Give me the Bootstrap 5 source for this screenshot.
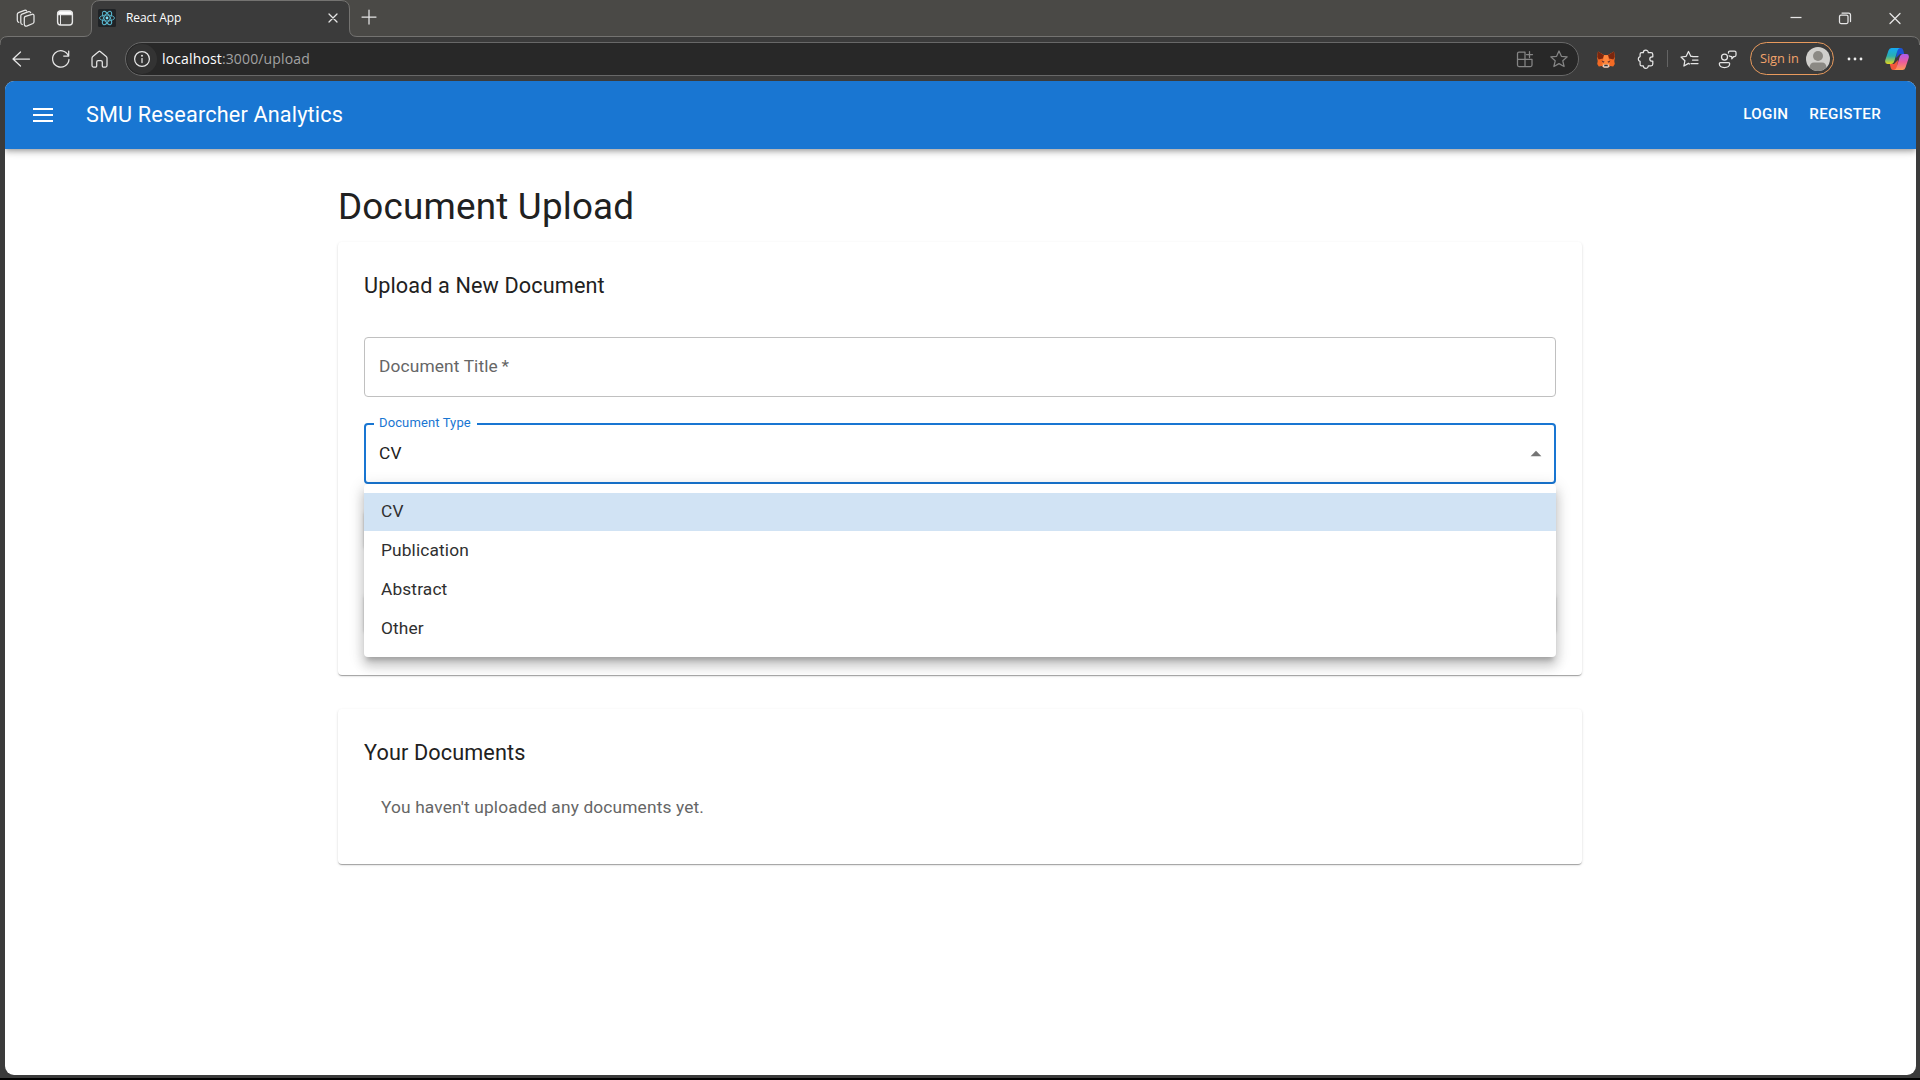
<!DOCTYPE html>
<html lang="en">
<head>
<meta charset="utf-8">
<meta name="viewport" content="width=device-width, initial-scale=1">
<title>React App</title>
<link href="https://cdn.jsdelivr.net/npm/bootstrap@5.3.0/dist/css/bootstrap.min.css" rel="stylesheet">
<style>
  body { width: 1920px; height: 1080px; overflow: hidden; background: #3b3b3b; font-family: Roboto, "Liberation Sans", sans-serif; color: #212121; border-bottom: 2px solid #000; }
  .ui-font { font-family: "Open Sans", "Noto Sans", sans-serif; }
  .ico { width: 24px; height: 24px; flex: none; display: block; fill: none; stroke: #e6e6e6; stroke-width: 1.25; stroke-linecap: round; stroke-linejoin: round; }
  .ico.dim { stroke: #858585; }
  .strip-outline { left: 0; top: 0; pointer-events: none; }
  .tab-row { height: 36px; }
  .browser-tab { width: 259px; height: 36px; margin-left: 14px; padding: 0 5px 0 7px; }
  .tab-title { font-size: 12px; letter-spacing: -.1px; color: #fff; margin-left: 10px; line-height: 16px; }
  .toolbar { height: 45px; padding: 0 11px 0 9px; }
  .address { width: 1454px; height: 34px; margin-left: 13px; background: #282828; border: 1px solid #686868; padding: 0 7px 0 1px; }
  .site-info { width: 30px; height: 30px; background: #333; }
  .url-text { font-size: 14px; margin-left: 5px; color: #a2a2a2; line-height: 20px; letter-spacing: .14px; padding-top: 1px; }
  .url-text span { color: #fff; }
  .bar-divider { width: 1px; height: 17px; margin-left: 9px; background: #646464; }
  .sign-in { width: 84px; height: 33px; margin-left: 10px; border: 1px solid #e89a5d; color: #f2a36b; font-size: 12.8px; padding: 0 3px 0 9px; letter-spacing: -.1px; }
  .viewport { margin: 0 4.5px 0 5px; height: 994px; border-radius: 9px; background: #fff; }
  .app-bar { height: 68px; background: #1976d2; color: #fff; padding: 0 34.5px 0 28px; box-shadow: 0 2px 4px -1px rgba(0,0,0,.2), 0 4px 5px rgba(0,0,0,.14), 0 1px 11px rgba(0,0,0,.12); z-index: 1; }
  .app-title { font-size: 21.67px; letter-spacing: .16px; font-weight: 400; margin-left: 33px; line-height: 34px; }
  .nav-action { font-size: 15.17px; font-weight: 500; letter-spacing: .3px; line-height: 26px; text-transform: uppercase; color: #fff; padding-bottom: 2px; }
  .page-column { width: 1244px; margin-left: 333px; padding-top: 35px; }
  .page-title { font-size: 36.83px; font-weight: 400; letter-spacing: .19px; line-height: 45px; margin-bottom: 13px; }
  .paper { background: #fff; border-radius: 4px; padding: 26px; box-shadow: 0 2px 1px -1px rgba(0,0,0,.2), 0 1px 1px rgba(0,0,0,.14), 0 1px 3px rgba(0,0,0,.12); }
  .paper-title { font-size: 21.67px; font-weight: 400; letter-spacing: .12px; line-height: 35px; margin: 0; }
  .field { height: 60px; border: 1px solid #c0c0c0; border-radius: 4px; padding: 0 15px 1px 14px; font-size: 17.33px; letter-spacing: .13px; color: #666; }
  .field-active { height: 61px; border: 2px solid #1976d2; color: #212121; padding: 1px 5px 0 13px; }
  .float-label { left: 8px; top: -12px; padding: 0 6px 0 5px; background: #fff; color: #1976d2; font-size: 13px; line-height: 20px; letter-spacing: .12px; width: 103px; white-space: nowrap; }
  .option-list { left: -2px; right: -2px; top: 59px; height: 173px; padding: 9px 0; background: #fff; border-radius: 4px; z-index: 2; color: #2f2f2f; box-shadow: 0 5.4px 5.4px -3.2px rgba(0,0,0,.2), 0 8.7px 10.8px 1px rgba(0,0,0,.14), 0 3.2px 15px 2px rgba(0,0,0,.12); }
  .option { height: 39px; line-height: 37px; padding-left: 17px; }
  .option.selected { background: #d1e3f4; height: 38px; margin-bottom: 1px; }
  .hidden-action { height: 38px; border-radius: 4px; border: 0; background: transparent; box-shadow: 0 3px 1px -2px rgba(0,0,0,.2), 0 2px 2px rgba(0,0,0,.14), 0 1px 5px rgba(0,0,0,.12); }
  .empty-note { font-size: 17.33px; letter-spacing: .14px; color: #666; line-height: 26px; margin: 24px 0 0 17px; }
</style>
<script src="https://cdn.jsdelivr.net/npm/bootstrap@5.3.0/dist/js/bootstrap.bundle.min.js"></script>
</head>
<body>
<header class="ui-font position-relative">
  <svg class="strip-outline position-absolute" width="1920" height="48">
    <rect width="1920" height="48" fill="#4a4946"/>
    <path d="M0 48V44Q0 36.500 8 36.500H84Q91.500 36.500 91.500 29V9Q91.500 .5 100 .5H341Q349.500 .5 349.500 9V29Q349.500 36.500 357 36.500H1911Q1919.500 36.500 1919.500 44V48Z" fill="#3b3b3b" stroke="#747371"/>
    <rect y="45" width="1920" height="3" fill="#3b3b3b"/>
  </svg>
  <div class="tab-row d-flex align-items-center position-relative">
    <svg class="ico" style="margin-left:14px" viewBox="0 0 24 24"><path d="M11.500 10.300l6.500-2q2-.5 2 1.500v6q0 1.200-1.100 1.700l-5.600 2.300q-3 1-3-1.800v-6q0-1.300 1.200-1.700z"/><path d="M8.300 18.500q-1.500-.3-1.500-2v-6.700q0-1.200 1.200-1.700l6.500-2.400q1.700-.5 2.200 1"/><path d="M4.800 16.300q-1.500-.4-1.500-2V8.300q0-1.200 1.200-1.700l6-2.300q1.400-.4 2 .6"/></svg>
    <svg class="ico" style="margin-left:15px" viewBox="0 0 24 24"><rect x="4.600" y="5" width="14.800" height="14" rx="3" stroke-width="1.400"/><path d="M5 8.700V7.500q0-2.500 2.500-2.500h9q2.500 0 2.500 2.500v1.200z" fill="#fff"/><path d="M7.500 9v9.500" stroke-width="1"/></svg>
    <div class="browser-tab d-flex align-items-center">
      <svg width="18" height="18" viewBox="0 0 18 18" class="flex-shrink-0"><rect width="18" height="18" rx="1.500" fill="#202326"/><g fill="none" stroke="#59b6cd" stroke-width=".9"><ellipse cx="9" cy="9" rx="7.500" ry="3"/><ellipse cx="9" cy="9" rx="7.500" ry="3" transform="rotate(60 9 9)"/><ellipse cx="9" cy="9" rx="7.500" ry="3" transform="rotate(120 9 9)"/></g><circle cx="9" cy="9" r="1.400" fill="#7adcf4"/></svg>
      <span class="tab-title">React App</span>
      <svg class="ico ms-auto" viewBox="0 0 24 24"><path d="M8 8l8 8M16 8l-8 8"/></svg>
    </div>
    <svg class="ico" style="margin-left:6.500px" viewBox="0 0 24 24"><path d="M12 4v14M5 11h14"/></svg>
    <svg class="ico ms-auto" viewBox="0 0 24 24" style="margin-right:25.500px"><path d="M6.500 11.500h11" stroke-linecap="butt"/></svg>
    <svg class="ico" viewBox="0 0 24 24" style="margin-right:26px"><rect x="6.500" y="9" width="8.500" height="8.500" rx="1.500"/><path d="M9 7h6.500q2 0 2 2v6.500"/></svg>
    <svg class="ico" viewBox="0 0 24 24" style="margin-right:13px"><path d="M7 7.500l10 10M17 7.500l-10 10"/></svg>
  </div>
  <div class="toolbar d-flex align-items-center position-relative">
    <svg class="ico" viewBox="0 0 24 24"><path d="M20.500 12H4.500M11.500 5l-7.500 7 7.500 7"/></svg>
    <svg class="ico" style="margin-left:16px" viewBox="0 0 24 24"><path d="M19.300 8.500A8.200 8.200 0 1 0 20 12.500M19.700 4v5h-5"/></svg>
    <svg class="ico" style="margin-left:15px" viewBox="0 0 24 24"><path d="M4.500 11.200q0-1 .8-1.700l6-5q.7-.5 1.400 0l6 5q.8.700.8 1.700v7.300q0 1.500-1.500 1.500h-2.200q-1 0-1-1v-4q0-1.500-1.500-1.500h-2.600q-1.500 0-1.500 1.500v4q0 1-1 1H6q-1.500 0-1.500-1.500z" transform="translate(-.5 0)"/></svg>
    <div class="address rounded-pill d-flex align-items-center">
      <span class="site-info rounded-circle d-flex align-items-center justify-content-center"><svg class="ico" viewBox="0 0 24 24"><circle cx="12" cy="12" r="7.400"/><path d="M12 11.500v4"/><circle cx="12" cy="8.700" r=".4" fill="#fff"/></svg></span>
      <span class="url-text"><span>localhost</span>:3000/upload</span>
      <svg class="ico dim ms-auto" viewBox="0 0 24 24"><path d="M12 5H6q-1.500 0-1.500 1.500V18q0 1.500 1.500 1.500h11.500q1.500 0 1.500-1.500v-5.700H4.500M12 5v14.500M16.500 4.500v6M13.500 7.500h6"/></svg>
      <svg class="ico dim" style="margin-left:10px" viewBox="0 0 24 24"><path d="M12 4l2.400 5.300 5.800.6-4.400 3.900 1.300 5.700L12 16.600l-5.100 2.900 1.300-5.700-4.400-3.900 5.800-.6z"/></svg>
    </div>
    <svg class="flex-shrink-0" width="24" height="24" style="margin-left:15px" viewBox="0 0 24 24"><path d="M4 4.500l6 3.500h4l6-3.500 1 5.500-.7 4 .5 3-1.600 2.600-3-.6-2 1.500h-4.400l-2-1.500-3 .6L3.200 17l.5-3L3 10z" fill="#f26a24"/><path d="M4 4.500l6 3.700-1 3.300-4.300 1L3.200 10zM20 4.500l-6 3.700 1 3.300 4.300 1L20.800 10z" fill="#7a270f"/><path d="M10 8.200h4l1.200 7L16 18H8l.8-2.800z" fill="#ff873d"/><path d="M7.500 13.500l3.200 1.200-1.500 1zM16.500 13.500l-3.200 1.200 1.500 1z" fill="#4c2530"/><path d="M9.300 17.500h5.400l.8 2-1.500 1.200h-4l-1.500-1.200z" fill="#e0d0c8"/><path d="M10.500 17.800h3l.5 1.500h-4z" fill="#333"/></svg>
    <svg class="ico" style="margin-left:16px" viewBox="0 0 24 24"><path d="M7.500 5.700h1.800a2.500 2.500 0 0 1 5 0h2.700q1.800 0 1.800 1.800v2.300h-.8a2.200 2.200 0 0 0 0 4.400h.8v2.800q0 1.800-1.800 1.800h-2.700a2.500 2.500 0 0 1-5 0H7.500q-1.400 0-1.400-1.400v-3a2.500 2.500 0 0 1 0-4.800V7.100q0-1.400 1.400-1.400z"/></svg>
    <span class="bar-divider"></span>
    <svg class="ico" style="margin-left:10px" viewBox="0 0 24 24"><path d="M14.500 9.300h-1.700L10.500 4.500 8.200 9.300l-5.200.7 3.900 3.700-1 5.300 4.600-2.600 1 .6M14.500 9.500H20M14.500 13H20M13 16.500h7"/></svg>
    <svg class="ico" style="margin-left:14px" viewBox="0 0 24 24"><circle cx="8.500" cy="10" r="3"/><path d="M4.500 15.500h8q1.200 0 1.200 1.200-.3 3.800-5.200 3.800t-5.200-3.800q0-1.200 1.200-1.200zM12.500 6V5q0-1 1.300-1h4.700q1.500 0 1.500 1.500V8q0 1.500-1.500 1.500h-.7l-2 2.300V9.500q-2 0-2.600-.7"/></svg>
    <div class="sign-in rounded-pill d-flex align-items-center justify-content-between"><span>Sign in</span>
      <svg width="24" height="24" viewBox="0 0 24 24" class="flex-shrink-0"><circle cx="12" cy="12" r="12" fill="#d0cfcc"/><circle cx="12" cy="9" r="5" fill="#8b8984"/><path d="M3.500 20.500Q4 15.500 8 15.500h8q4 0 4.500 5a12 12 0 0 1-17 0z" fill="#8b8984"/></svg></div>
    <svg class="ico" style="margin-left:9px" viewBox="0 0 24 24"><g fill="#eee" stroke="none"><circle cx="6" cy="12" r="1.400"/><circle cx="12" cy="12" r="1.400"/><circle cx="18" cy="12" r="1.400"/></g></svg>
    <svg class="flex-shrink-0" style="margin-left:18px" width="24" height="24" viewBox="0 0 24 24">
      <defs><linearGradient id="coolRibbon" x1="0" y1="0" x2="0" y2="1"><stop stop-color="#15a9f4"/><stop offset=".5" stop-color="#2aafb0"/><stop offset="1" stop-color="#e4d51b"/></linearGradient><linearGradient id="warmRibbon" x1="0" y1="0" x2="0" y2="1"><stop stop-color="#a95cf0"/><stop offset=".5" stop-color="#ee5b9b"/><stop offset="1" stop-color="#ff9a55"/></linearGradient></defs>
      <path d="M12 1h4q1.500 0 2.200 2l1 4H15l-4 4z" fill="#1b53d4"/>
      <path d="M6.500 1H15q-2 .5-2.700 3l-2.800 9.500q-1 3.500-3.500 3.500H2.500Q-.5 17 .3 13L3.500 3.500Q4.300 1 6.500 1z" fill="url(#coolRibbon)"/>
      <path d="M12 23H8q-1.500 0-2.200-2l-1-4H9l4-4z" fill="#f2573c"/>
      <path d="M17.500 23H9q2-.5 2.700-3l2.800-9.500q1-3.500 3.500-3.500h3.500q3 0 2.200 4l-3.200 9.500q-.8 2.500-3 2.500z" fill="url(#warmRibbon)"/>
    </svg>
  </div>
</header>

<div class="viewport overflow-hidden">
  <nav class="app-bar d-flex align-items-center position-relative">
    <svg width="20" height="14" viewBox="0 0 20 14" fill="#fff" class="flex-shrink-0"><path d="M0 0h20v2H0zM0 6h20v2H0zM0 12h20v2H0z"/></svg>
    <span class="app-title">SMU Researcher Analytics</span>
    <a class="nav-action ms-auto text-decoration-none" href="#">Login</a>
    <a class="nav-action text-decoration-none" style="margin-left:21px" href="#">Register</a>
  </nav>
  <main class="page-column">
    <h1 class="page-title">Document Upload</h1>
    <section class="paper" style="height:433px">
      <h2 class="paper-title">Upload a New Document</h2>
      <div class="field d-flex align-items-center" style="margin-top:34px">Document Title&thinsp;*</div>
      <div class="field field-active d-flex align-items-center justify-content-between position-relative" style="margin-top:26px">
        <span class="float-label position-absolute">Document Type</span>
        <span>CV</span>
        <svg width="26" height="26" viewBox="0 0 24 24"><path d="M7 14l5-5 5 5z" fill="#757575"/></svg>
        <div class="option-list position-absolute">
          <div class="option selected">CV</div>
          <div class="option">Publication</div>
          <div class="option">Abstract</div>
          <div class="option">Other</div>
        </div>
      </div>
      <button class="hidden-action d-block w-25" style="margin-top:26px" aria-label="Choose file"></button>
      <button class="hidden-action d-block w-100" style="margin-top:46px" aria-label="Upload document"></button>
    </section>
    <section class="paper" style="height:155px;margin-top:34px">
      <h2 class="paper-title">Your Documents</h2>
      <p class="empty-note">You haven't uploaded any documents yet.</p>
    </section>
  </main>
</div>
</body>
</html>
